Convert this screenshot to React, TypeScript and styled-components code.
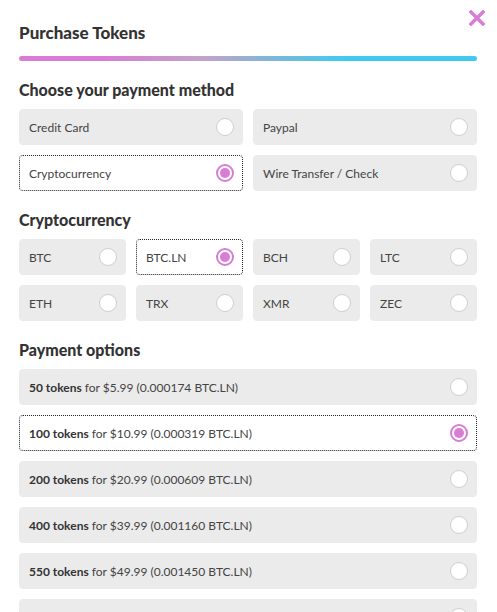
import React, { useState } from "react";
import styled, { createGlobalStyle } from "styled-components";

const GlobalStyle = createGlobalStyle`
  body {
    margin: 0;
    background: #fff;
    font-family: Lato, "Open Sans", sans-serif;
  }
`;

const Modal = styled.div`
  position: relative;
  padding: 23px 20px 0 19px;
  width: 458px;
  height: 612px;
  overflow: hidden;
`;

const Title = styled.h1`
  margin: 0;
  font-size: 17px;
  line-height: 20px;
  font-weight: 900;
  color: #333;
`;

const Close = styled.button`
  position: absolute;
  top: 10px;
  right: 12px;
  width: 16px;
  height: 16px;
  padding: 0;
  border: none;
  background: none;
  cursor: pointer;
`;

const Bar = styled.div`
  margin-top: 13px;
  height: 5px;
  border-radius: 3px;
  background: linear-gradient(to right, #d97cd5 0%, #d97cd5 18%, #c4a2c8 40%, #7fb6d8 55%, #3ecbef 72%, #3ecbef 100%);
`;

const Heading = styled.h2`
  margin: 19px 0 9px;
  font-size: 16px;
  line-height: 20px;
  font-weight: 900;
  color: #333;
`;

const Grid = styled.div<{ $cols: number }>`
  display: grid;
  grid-template-columns: repeat(${(p) => p.$cols}, 1fr);
  gap: 10px;
`;

const List = styled.div`
  display: flex;
  flex-direction: column;
  gap: 10px;
`;

const Option = styled.label<{ $active: boolean }>`
  display: flex;
  align-items: center;
  justify-content: space-between;
  box-sizing: border-box;
  height: 36px;
  padding: 0 8px 0 9px;
  border-radius: 4px;
  background: ${(p) => (p.$active ? "#fff" : "#ebebeb")};
  border: 1px ${(p) => (p.$active ? "dotted #222" : "solid #ebebeb")};
  font-size: 12px;
  color: #444;
  cursor: pointer;

  b {
    font-weight: 700;
    color: #333;
  }
`;

const Radio = styled.span<{ $active: boolean }>`
  flex: none;
  box-sizing: border-box;
  width: 18px;
  height: 18px;
  border-radius: 50%;
  background: #fff;
  border: ${(p) => (p.$active ? "2px solid #d97cd5" : "1px solid #cfcfcf")};
  display: flex;
  align-items: center;
  justify-content: center;

  &::after {
    content: "";
    display: ${(p) => (p.$active ? "block" : "none")};
    width: 10px;
    height: 10px;
    border-radius: 50%;
    background: #d97cd5;
  }
`;

const methods = ["Credit Card", "Paypal", "Cryptocurrency", "Wire Transfer / Check"];
const coins = ["BTC", "BTC.LN", "BCH", "LTC", "ETH", "TRX", "XMR", "ZEC"];
const packs = [
  { tokens: 50, price: "5.99", btc: "0.000174" },
  { tokens: 100, price: "10.99", btc: "0.000319" },
  { tokens: 200, price: "20.99", btc: "0.000609" },
  { tokens: 400, price: "39.99", btc: "0.001160" },
  { tokens: 550, price: "49.99", btc: "0.001450" },
  { tokens: 1000, price: "89.99", btc: "0.002610" },
];

export default function App() {
  const [method, setMethod] = useState("Cryptocurrency");
  const [coin, setCoin] = useState("BTC.LN");
  const [pack, setPack] = useState(100);

  return (
    <>
      <GlobalStyle />
      <Modal>
        <Close aria-label="Close">
          <svg width="16" height="16" viewBox="0 0 16 16">
            <path d="M2 2 L14 14 M14 2 L2 14" stroke="#d97cd5" strokeWidth="3.4" strokeLinecap="square" />
          </svg>
        </Close>
        <Title>Purchase Tokens</Title>
        <Bar />

        <Heading>Choose your payment method</Heading>
        <Grid $cols={2}>
          {methods.map((m) => (
            <Option key={m} $active={method === m} onClick={() => setMethod(m)}>
              {m}
              <Radio $active={method === m} />
            </Option>
          ))}
        </Grid>

        <Heading>Cryptocurrency</Heading>
        <Grid $cols={4}>
          {coins.map((c) => (
            <Option key={c} $active={coin === c} onClick={() => setCoin(c)}>
              {c}
              <Radio $active={coin === c} />
            </Option>
          ))}
        </Grid>

        <Heading>Payment options</Heading>
        <List>
          {packs.map((p) => (
            <Option key={p.tokens} $active={pack === p.tokens} onClick={() => setPack(p.tokens)}>
              <span>
                <b>{p.tokens} tokens</b> for ${p.price} ({p.btc} {coin})
              </span>
              <Radio $active={pack === p.tokens} />
            </Option>
          ))}
        </List>
      </Modal>
    </>
  );
}
